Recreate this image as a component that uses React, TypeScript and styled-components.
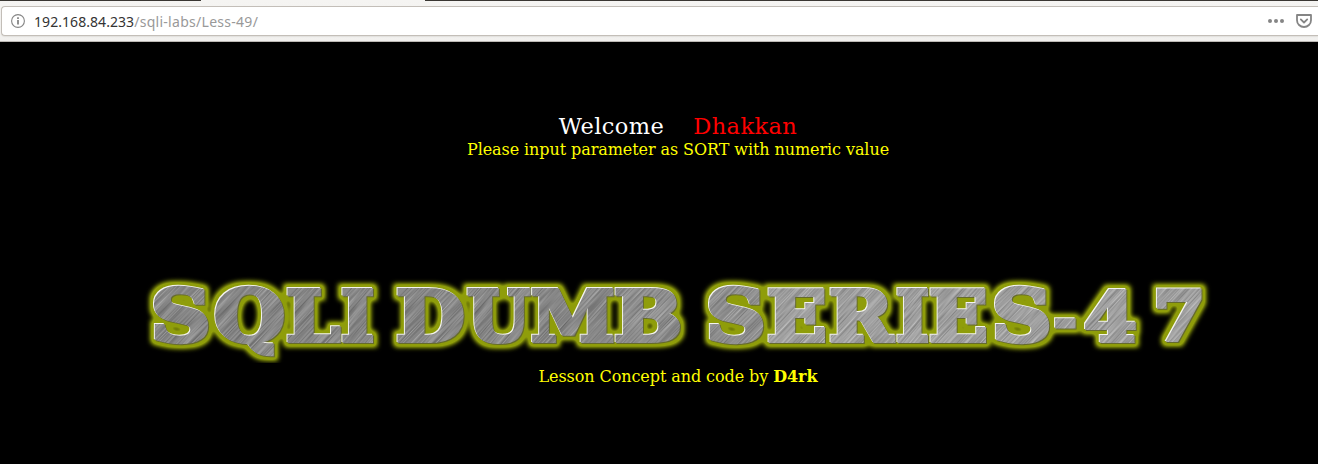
import React from 'react';
import styled, { createGlobalStyle } from 'styled-components';

const GlobalStyle = createGlobalStyle`
  html, body, #root { height: 100%; }
  body { margin: 0; background: #000; overflow: hidden; }
`;

const Page = styled.div`
  height: 464px;
  display: flex;
  flex-direction: column;
  background: #000;
  font-family: "DejaVu Serif", serif;
`;

const Toolbar = styled.header`
  box-sizing: border-box;
  height: 42px;
  flex: none;
  display: flex;
  flex-direction: column;
  background: linear-gradient(#f5f4f2, #f1f0ee);
  border-bottom: 1px solid #bcb9b5;
`;

const TabStrip = styled.div`
  height: 1px;
  flex: none;
  margin-bottom: 5px;
  background: linear-gradient(90deg, #3a3733 201px, #f5f4f2 201px, #f5f4f2 425px, #3a3733 425px);
`;

const AddressBar = styled.div`
  box-sizing: border-box;
  height: 30px;
  margin-left: 1px;
  padding: 0 6px 0 9px;
  display: flex;
  align-items: center;
  background: #fff;
  border: 1px solid #c3beb8;
  border-right: 0;
  border-radius: 4px 0 0 4px;
  box-shadow: 0 1px 1px #e2e0dd;
`;

const Address = styled.span`
  flex: 1;
  margin: 2px 0 0 9px;
  font: 14px/20px "Noto Sans", sans-serif;
  letter-spacing: 0.28px;
  color: #999;
  white-space: pre;
`;

const Host = styled.span`
  color: #333;
  letter-spacing: 0.06px;
`;

const Actions = styled.div`
  display: flex;
  align-items: center;
  gap: 12px;
`;

const Content = styled.main`
  display: flex;
  flex-direction: column;
  align-items: center;
  padding-left: 38px;
`;

const Greeting = styled.div`
  margin-top: 70px;
  height: 28px;
  display: flex;
  gap: 29px;
  font-size: 22.5px;
  line-height: 28px;
  letter-spacing: 0.4px;
  color: #fff;
`;

const Name = styled.span`
  color: #f00;
`;

const Line = styled.div`
  font-size: 16px;
  line-height: 20px;
  letter-spacing: -0.08px;
  color: #ff0;
  white-space: pre;
`;

const Banner = styled.svg`
  display: block;
  width: 1076px;
  height: 96px;
  margin: 107px 0 4px;
`;

type Letter = { char: string; left: number; right: number; top?: number; bottom?: number };

const LETTERS: Letter[] = [
  { char: 'S', left: 154, right: 209, top: 286, bottom: 344 },
  { char: 'Q', left: 215, right: 284, top: 285, bottom: 356 },
  { char: 'L', left: 287, right: 341 },
  { char: 'I', left: 342, right: 374 },
  { char: 'D', left: 397, right: 464 },
  { char: 'U', left: 467, right: 531, bottom: 344 },
  { char: 'M', left: 532, right: 614 },
  { char: 'B', left: 615, right: 681 },
  { char: 'S', left: 709, right: 764, top: 286, bottom: 344 },
  { char: 'E', left: 768, right: 826 },
  { char: 'R', left: 830, right: 896 },
  { char: 'I', left: 897, right: 929 },
  { char: 'E', left: 930, right: 987 },
  { char: 'S', left: 995, right: 1050, top: 286, bottom: 344 },
  { char: '-', left: 1055, right: 1076, top: 317, bottom: 328 },
  { char: '4', left: 1085, right: 1136 },
  { char: '7', left: 1157, right: 1202 },
];

const FONT_SIZE = 76;
const STROKE = 4.6;

// Scales a glyph so that its ink fills the letter's slot in the banner.
function fitGlyph({ char, left, right, top = 288, bottom = 343 }: Letter) {
  const ctx = document.createElement('canvas').getContext('2d')!;
  ctx.font = `bold ${FONT_SIZE}px "DejaVu Serif"`;
  const m = ctx.measureText(char);
  const inkLeft = -m.actualBoundingBoxLeft - STROKE / 2;
  const inkTop = -m.actualBoundingBoxAscent - STROKE / 2;
  const sx = (right - left) / (m.actualBoundingBoxRight + STROKE / 2 - inkLeft);
  const sy = (bottom - top) / (m.actualBoundingBoxDescent + STROKE / 2 - inkTop);
  return `translate(${left - inkLeft * sx} ${top - inkTop * sy}) scale(${sx} ${sy})`;
}

const MetalGlyph = styled.text<{ $metal: string }>`
  font: bold ${FONT_SIZE}px "DejaVu Serif", serif;
  fill: url(#${(p) => p.$metal});
  stroke: url(#${(p) => p.$metal});
  stroke-width: ${STROKE}px;
`;

// Three shades of brushed steel, brightening from left to right.
const METALS = [
  { id: 'steel-dark', base: 0.34, x: -100 },
  { id: 'steel-mid', base: 0.37, x: -130 },
  { id: 'steel-light', base: 0.43, x: -160 },
];

const metalFor = (left: number) => METALS[left < 600 ? 0 : left < 760 ? 1 : 2].id;

function Title() {
  return (
    <Banner viewBox="140 267 1076 96">
      <defs>
        {METALS.map(({ id, base, x }) => (
          <React.Fragment key={id}>
            <filter id={`${id}-grain`} x="0" y="0" width="100%" height="100%" colorInterpolationFilters="sRGB">
              <feTurbulence type="fractalNoise" baseFrequency="0.02 0.8" numOctaves="2" seed="4" />
              <feColorMatrix
                values={`0.38 0 0 0 ${base}  0.38 0 0 0 ${base}  0.38 0 0 0 ${base}  0 0 0 0 1`}
              />
            </filter>
            <pattern id={id} patternUnits="userSpaceOnUse" width="300" height="300" x={x} y="-150" patternTransform="rotate(-50)">
              <rect width="300" height="300" filter={`url(#${id}-grain)`} />
            </pattern>
          </React.Fragment>
        ))}
        <filter id="bevel" x="-20%" y="-20%" width="140%" height="140%" colorInterpolationFilters="sRGB">
          <feOffset in="SourceAlpha" dx="-1" dy="-1" result="lit" />
          <feFlood floodColor="#f4f4f0" />
          <feComposite in2="lit" operator="in" result="light" />
          <feOffset in="SourceAlpha" dx="1" dy="0.6" result="shade" />
          <feFlood floodColor="#666b2c" />
          <feComposite in2="shade" operator="in" result="dark" />
          <feMerge>
            <feMergeNode in="dark" />
            <feMergeNode in="light" />
            <feMergeNode in="SourceGraphic" />
          </feMerge>
        </filter>
        <filter id="glow" filterUnits="userSpaceOnUse" x="140" y="267" width="1076" height="96" colorInterpolationFilters="sRGB">
          <feMorphology in="SourceAlpha" operator="dilate" radius="3" />
          <feGaussianBlur stdDeviation="2.5" />
          <feComponentTransfer result="halo">
            <feFuncA type="linear" slope="1.6" />
          </feComponentTransfer>
          <feFlood floodColor="#8f9d0a" />
          <feComposite in2="halo" operator="in" />
          <feMerge>
            <feMergeNode />
            <feMergeNode in="SourceGraphic" />
          </feMerge>
        </filter>
      </defs>
      <g filter="url(#glow)">
        {LETTERS.map((letter, i) => (
          <g key={i} filter="url(#bevel)">
            <MetalGlyph $metal={metalFor(letter.left)} transform={fitGlyph(letter)}>
              {letter.char}
            </MetalGlyph>
          </g>
        ))}
      </g>
    </Banner>
  );
}

export default function App() {
  return (
    <Page>
      <GlobalStyle />
      <Toolbar>
        <TabStrip />
        <AddressBar>
          <svg width="14" height="14" viewBox="0 0 14 14" fill="none">
            <circle cx="7" cy="7" r="6.4" stroke="#858585" strokeWidth="1.1" />
            <path d="M7 6v4.5M7 3.2v1.8" stroke="#777" strokeWidth="1.6" />
          </svg>
          <Address>
            <Host>192.168.84.233</Host>/sqli-labs/Less-49/
          </Address>
          <Actions>
            <svg width="16" height="4" viewBox="0 0 16 4" fill="#858585">
              <circle cx="2" cy="2" r="2" />
              <circle cx="8" cy="2" r="2" />
              <circle cx="14" cy="2" r="2" />
            </svg>
            <svg width="16" height="14" viewBox="0 0 16 14" fill="none" stroke="#858585" strokeWidth="1.8" strokeLinejoin="round" strokeLinecap="round">
              <path d="M1 1h14v5.2a7 6.8 0 0 1-14 0z" />
              <path d="M4.8 5.4 8 8.5l3.2-3.1" />
            </svg>
          </Actions>
        </AddressBar>
      </Toolbar>
      <Content>
        <Greeting>
          <span>Welcome</span>
          <Name>Dhakkan</Name>
        </Greeting>
        <Line>Please input parameter as SORT with numeric value</Line>
        <Title />
        <Line>
          Lesson Concept and code by <b>D4rk</b>
        </Line>
      </Content>
    </Page>
  );
}
